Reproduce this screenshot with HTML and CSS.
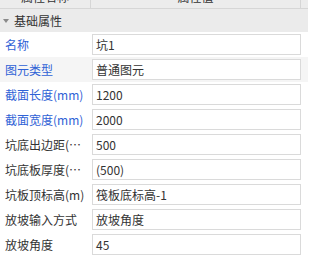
FILE: index.html
```html
<!DOCTYPE html>
<html lang="zh">
<head>
<meta charset="utf-8">
<link rel="stylesheet" href="styles.css">
</head>
<body>
<div class="grid">
  <div class="header">
    <div class="hcell name"><span>属性名称</span></div>
    <div class="hcell value"><span>属性值</span></div>
    <div class="hcell rest"></div>
  </div>
  <div class="group"><span class="tri"></span><span>基础属性</span></div>
  <div class="row"><div class="label blue">名称</div><div class="box">坑1</div></div>
  <div class="row alt"><div class="label blue">图元类型</div><div class="box">普通图元</div></div>
  <div class="row"><div class="label blue">截面长度(mm)</div><div class="box">1200</div></div>
  <div class="row"><div class="label blue">截面宽度(mm)</div><div class="box">2000</div></div>
  <div class="row"><div class="label">坑底出边距(mm)</div><div class="box">500</div></div>
  <div class="row"><div class="label">坑底板厚度(mm)</div><div class="box">(500)</div></div>
  <div class="row"><div class="label">坑板顶标高(m)</div><div class="box">筏板底标高-1</div></div>
  <div class="row"><div class="label">放坡输入方式</div><div class="box">放坡角度</div></div>
  <div class="row"><div class="label">放坡角度</div><div class="box">45</div></div>
</div>
</body>
</html>
```
FILE: styles.css
```css
html, body {
  margin: 0;
  padding: 0;
  background: #ffffff;
}
body {
  width: 308px;
  height: 261px;
  overflow: hidden;
  font-family: "Noto Sans CJK SC", "Noto Sans", sans-serif;
  font-size: 12px;
  color: #333333;
}
.header {
  display: grid;
  grid-template-columns: 91px 210px 1fr;
  height: 8px;
  overflow: hidden;
  background: #ececec;
  border-bottom: 1px solid #d6d6d6;
}
.hcell {
  border-right: 1px solid #d6d6d6;
  text-align: center;
  overflow: hidden;
}
.hcell span {
  display: block;
  line-height: 16px;
  margin-top: -11px;
  color: #333;
}
.hcell.rest {
  border-right: none;
}
.group {
  height: 23px;
  background: #ebebeb;
  display: flex;
  align-items: center;
  gap: 5px;
  padding-left: 3px;
  color: #333;
}
.tri {
  width: 0;
  height: 0;
  border-left: 3px solid transparent;
  border-right: 3px solid transparent;
  border-top: 4px solid #8a8a8a;
  margin-top: 1px;
}
.row {
  display: grid;
  grid-template-columns: 92px 209px;
  align-items: center;
  height: 25px;
  background: #ffffff;
}
.row.alt {
  background: #f5f5f5;
}
.label {
  min-width: 0;
  padding-left: 5px;
  padding-right: 6px;
  white-space: nowrap;
  overflow: hidden;
  text-overflow: ellipsis;
  color: #333;
}
.label.blue {
  color: #2f62d6;
}
.box {
  box-sizing: border-box;
  height: 21px;
  line-height: 19px;
  border: 1px solid #dadada;
  background: #ffffff;
  padding-left: 3px;
  white-space: nowrap;
  overflow: hidden;
  color: #333;
}
```
